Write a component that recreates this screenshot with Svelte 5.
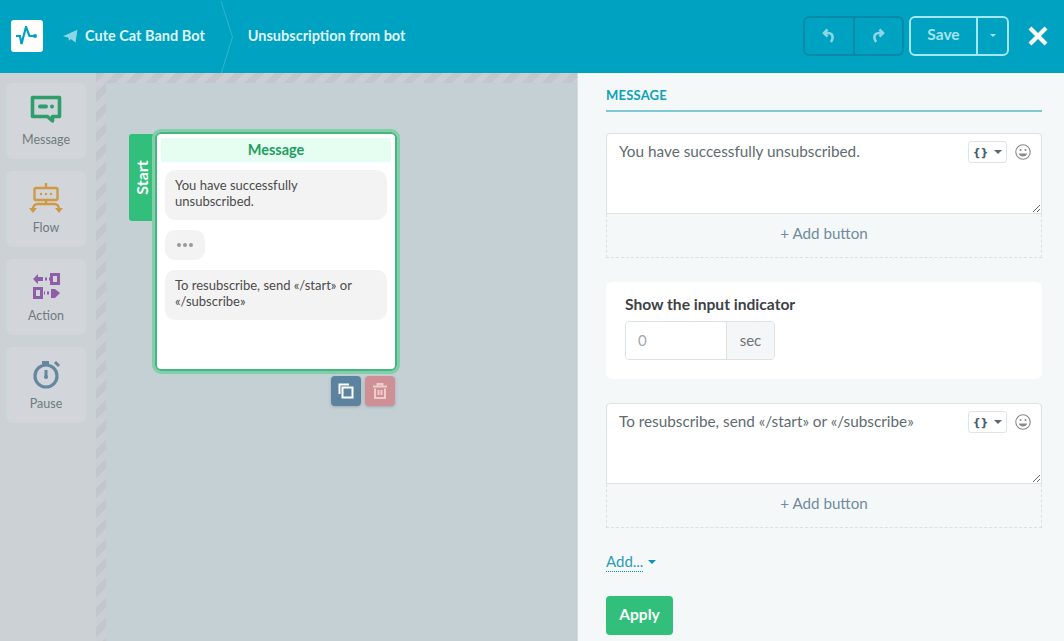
<script>
	const tools = [
		{ id: 'message', label: 'Message' },
		{ id: 'flow', label: 'Flow' },
		{ id: 'action', label: 'Action' },
		{ id: 'pause', label: 'Pause' }
	];

	const messages = [
		'You have successfully unsubscribed.',
		'To resubscribe, send «/start» or «/subscribe»'
	];
</script>

<div class="page">
	<header class="topbar">
		<div class="logo">
			<svg width="22" height="20" viewBox="0 0 22 20" fill="none" stroke="#00a2c1" stroke-width="2.200">
				<path d="M0 10h4l1.500 8L10 1l3.500 9H19" />
				<circle cx="19" cy="10" r="2" fill="#00a2c1" stroke="none" />
			</svg>
		</div>
		<svg class="plane" width="15" height="14" viewBox="0 0 15 14">
			<path d="M0 7.200 14.400.8 12.600 13.400 7.600 10l-1.400 2-1-3.600z" fill="#8ed6e6" />
		</svg>
		<span class="crumb">Cute Cat Band Bot</span>
		<svg class="chevron" width="14" height="73" viewBox="0 0 14 73" fill="none" stroke="#33b4cd">
			<path d="M1 0 12.500 36 1 73" />
		</svg>
		<span class="crumb current">Unsubscription from bot</span>

		<div class="actions">
			<div class="history">
				<button type="button" aria-label="Undo">
					<svg width="16" height="16" viewBox="0 0 16 16" fill="none" stroke="#8ed6e6" stroke-width="2.600">
						<path d="M6.500 1.500 3 5l3.500 3.500" />
						<path d="M3.500 5h3.500c3 0 4.600 2 4.600 4.200 0 1.900-.7 3.300-1.700 4.800" />
					</svg>
				</button>
				<button type="button" aria-label="Redo">
					<svg width="16" height="16" viewBox="0 0 16 16" fill="none" stroke="#8ed6e6" stroke-width="2.600">
						<path d="M9.500 1.500 13 5 9.500 8.500" />
						<path d="M12.500 5H9C6 5 4.400 7 4.400 9.200c0 1.900.7 3.300 1.700 4.800" />
					</svg>
				</button>
			</div>
			<div class="save">
				<button type="button" class="save-main">Save</button>
				<button type="button" class="save-caret" aria-label="More"><i class="caret light"></i></button>
			</div>
			<button type="button" class="close" aria-label="Close">
				<svg width="20" height="20" viewBox="0 0 20 20" stroke="#fff" stroke-width="4.200">
					<path d="M2 2l16 16M18 2 2 18" />
				</svg>
			</button>
		</div>
	</header>

	<main class="body">
		<section class="editor">
			<aside class="tools">
				{#each tools as tool}
					<div class="tool">
						<svg width="32" height="30" viewBox="0 0 32 30" fill="none">
							{#if tool.id === 'message'}
								<path d="M2.500 2.500h27v19h-7v4.500l-5-4.500h-15z" stroke="#2f9e6c" stroke-width="3.600" stroke-linejoin="round" fill="#d0d3d7" />
								<rect x="8" y="9.500" width="10" height="4" rx="2" fill="#2f9e6c" />
								<circle cx="22" cy="11.500" r="2" fill="#2f9e6c" />
							{:else if tool.id === 'flow'}
								<path d="M16 0v4M16 17v4M3 27c0-4 1-6 5-6h16c4 0 5 2 5 6" stroke="#d09a45" stroke-width="2.400" />
								<rect x="4.500" y="5" width="23" height="12" rx="1.500" stroke="#d09a45" stroke-width="2.400" />
								<circle cx="11" cy="11" r="1.200" fill="#d09a45" />
								<circle cx="16" cy="11" r="1.200" fill="#d09a45" />
								<circle cx="21" cy="11" r="1.200" fill="#d09a45" />
								<path d="M-1 25h8l-4 5zM25 25h8l-4 5z" fill="#d09a45" />
							{:else if tool.id === 'action'}
								<path d="M3 8l5-5v10zM8 6h5v4H8z" fill="#8e5fa8" />
								<path d="M15 8h2M19 8h1" stroke="#8e5fa8" stroke-width="3" />
								<rect x="21.500" y="3.500" width="7" height="9" stroke="#8e5fa8" stroke-width="3" />
								<rect x="4.500" y="17.500" width="7" height="9" stroke="#8e5fa8" stroke-width="3" />
								<path d="M14 22h1M17 22h2" stroke="#8e5fa8" stroke-width="3" />
								<path d="M21 18h4l5 4-5 5h-4z" fill="#8e5fa8" />
							{:else}
								<circle cx="16" cy="17" r="11" stroke="#65879f" stroke-width="3.200" />
								<path d="M16 11v7" stroke="#65879f" stroke-width="3" />
								<circle cx="16" cy="18" r="2" fill="#65879f" />
								<path d="M12 3.500h7M25 3l4 4" stroke="#65879f" stroke-width="3" />
							{/if}
						</svg>
						<span>{tool.label}</span>
					</div>
				{/each}
			</aside>

			<div class="canvas">
				<div class="node">
					<div class="start"><span>Start</span></div>
					<div class="node-card">
						<div class="node-title">Message</div>
						<div class="bubble">{messages[0]}</div>
						<div class="bubble typing"><i></i><i></i><i></i></div>
						<div class="bubble">{messages[1]}</div>
					</div>
					<div class="node-actions">
						<button type="button" class="copy" aria-label="Copy">
							<svg width="16" height="16" viewBox="0 0 16 16" fill="none" stroke="#fff" stroke-width="2">
								<path d="M1.500 11V1.500H11" />
								<rect x="4.500" y="4.500" width="10" height="10" />
							</svg>
						</button>
						<button type="button" class="remove" aria-label="Delete">
							<svg width="16" height="16" viewBox="0 0 16 16" fill="none" stroke="#eecccc" stroke-width="2">
								<path d="M1 3.500h14M5.500 3V1h5v2" />
								<path d="M3 5.500v9.500h10V5.500" />
								<path d="M6.500 7v5M9.500 7v5" />
							</svg>
						</button>
					</div>
				</div>
			</div>
		</section>

		<section class="panel">
			<h2>MESSAGE</h2>

			{@render messageBox(messages[0])}

			<div class="indicator">
				<label for="indicator-sec">Show the input indicator</label>
				<div class="input-group">
					<input id="indicator-sec" placeholder="0" />
					<span>sec</span>
				</div>
			</div>

			{@render messageBox(messages[1])}

			<button type="button" class="add-link"><span>Add...</span><i class="caret teal"></i></button>
			<button type="button" class="apply">Apply</button>
		</section>
	</main>
</div>

{#snippet messageBox(text)}
	<div class="message-box">
		<div class="text-wrap">
			<textarea value={text}></textarea>
			<div class="text-tools">
				<button type="button" class="vars" aria-label="Variables"><b>{'{}'}</b><i class="caret dark"></i></button>
				<svg width="16" height="16" viewBox="0 0 16 16" fill="none" stroke="#8a8a8a" stroke-width="1.100">
					<circle cx="8" cy="8" r="7.200" />
					<circle cx="5.500" cy="6" r="1" fill="#8a8a8a" stroke="none" />
					<circle cx="10.500" cy="6" r="1" fill="#8a8a8a" stroke="none" />
					<path d="M3.800 9.500h8.400c-.5 2-2 3-4.200 3s-3.700-1-4.200-3z" fill="#8a8a8a" stroke="none" />
				</svg>
			</div>
		</div>
		<div class="add-button">+ Add button</div>
	</div>
{/snippet}

<style>
	:global(body) {
		margin: 0;
		font-family: 'Lato', 'Noto Sans', sans-serif;
	}

	button {
		font-family: inherit;
		padding: 0;
		border: 0;
		background: none;
	}

	.page {
		width: 1064px;
		height: 641px;
		display: flex;
		flex-direction: column;
		overflow: hidden;
	}

	.topbar {
		height: 73px;
		flex: none;
		box-sizing: border-box;
		display: flex;
		align-items: center;
		padding: 0 16px 2px 11px;
		background: #00a2c1;
		color: #dff4f8;
	}

	.logo {
		width: 32px;
		height: 32px;
		margin-right: 20px;
		display: flex;
		align-items: center;
		justify-content: center;
		border-radius: 3px;
		background: #fff;
	}

	.plane {
		margin-right: 7px;
	}

	.crumb {
		font-size: 14.500px;
		font-weight: 700;
	}

	.chevron {
		margin: 1px 14px 0 15px;
		flex: none;
		align-self: flex-start;
	}

	.actions {
		margin-left: auto;
		display: flex;
		align-items: center;
	}

	.history {
		display: flex;
		height: 40px;
		width: 101px;
		box-sizing: border-box;
		border: 2px solid #0a8aa6;
		border-radius: 6px;
		margin-right: 5px;
	}

	.history button {
		flex: 1;
		display: flex;
		align-items: center;
		justify-content: center;
	}

	.history button + button {
		border-left: 2px solid #0a8aa6;
	}

	.save {
		display: flex;
		width: 100px;
		height: 40px;
		box-sizing: border-box;
		border: 2px solid #a5e6f2;
		border-radius: 6px;
		margin-right: 19px;
	}

	.save-main {
		flex: 1;
		padding-bottom: 3px;
		color: #a5e3ee;
		font-size: 15.500px;
		font-weight: 700;
	}

	.save-caret {
		width: 31px;
		display: flex;
		align-items: center;
		justify-content: center;
		border-left: 2px solid #a5e6f2;
	}

	.close {
		display: flex;
	}

	.caret {
		display: inline-block;
		width: 0;
		height: 0;
		border-left: 4px solid transparent;
		border-right: 4px solid transparent;
		border-top: 4px solid currentColor;
	}

	.caret.light {
		color: #a5e3ee;
		border-left-width: 3.500px;
		border-right-width: 3.500px;
		border-top-width: 3px;
	}

	.caret.teal {
		color: #0b96b3;
		margin-left: 5px;
	}

	.caret.dark {
		color: #5a6870;
		margin-left: 6px;
	}

	.body {
		flex: 1;
		display: flex;
		min-height: 0;
	}

	.editor {
		width: 578px;
		flex: none;
		display: flex;
		border-right: 1px solid #d7dcdd;
		box-sizing: border-box;
		background: #c5d0d5;
	}

	.tools {
		width: 96px;
		flex: none;
		box-sizing: border-box;
		padding: 10px 10px 0 6px;
		display: flex;
		flex-direction: column;
		gap: 12px;
		background: #cbd1d5;
	}

	.tool {
		height: 76px;
		box-sizing: border-box;
		padding-top: 12px;
		display: flex;
		flex-direction: column;
		align-items: center;
		border-radius: 6px;
		background: #d2d5d9;
		color: #717a80;
		font-size: 12.500px;
	}

	.tool svg {
		overflow: visible;
		margin-bottom: 7px;
	}

	.canvas {
		flex: 1;
		position: relative;
		background-color: #c5d0d5;
		border-left: 10px solid transparent;
		border-top: 10px solid transparent;
		background-image: repeating-linear-gradient(135deg, #c3c7cd 0 7px, #cbced3 7px 14px);
		background-origin: border-box;
		background-clip: border-box;
	}

	.canvas::before {
		content: '';
		position: absolute;
		inset: 0;
		background: #c5d0d5;
	}

	.node {
		position: absolute;
		left: 49px;
		top: 49px;
		width: 242px;
		height: 239px;
	}

	.start {
		position: absolute;
		left: -26px;
		top: 2px;
		width: 27px;
		height: 87px;
		box-sizing: border-box;
		padding-right: 2px;
		display: flex;
		align-items: center;
		justify-content: center;
		border-radius: 3px 0 0 3px;
		background: #32bf7c;
		color: #fff;
		font-size: 16px;
		font-weight: 700;
	}

	.start span {
		transform: rotate(-90deg);
	}

	.node-card {
		position: relative;
		height: 100%;
		box-sizing: border-box;
		padding: 4px 4px 0;
		border: 2px solid #47b57f;
		outline: 3px solid #80cfa8;
		border-radius: 6px;
		background: #fff;
	}

	.node-title {
		height: 24px;
		line-height: 24px;
		margin-bottom: 8px;
		text-align: center;
		background: #e6fdf1;
		color: #1e9e63;
		font-size: 14.500px;
		font-weight: 700;
	}

	.bubble {
		margin: 0 4px 10px;
		padding: 7px 20px 11px 10px;
		border-radius: 10px;
		background: #f3f3f3;
		color: #4b4b4b;
		font-size: 13px;
		line-height: 16px;
	}

	.bubble.typing {
		width: 40px;
		height: 30px;
		box-sizing: border-box;
		padding: 0;
		display: flex;
		align-items: center;
		justify-content: center;
		gap: 2px;
	}

	.bubble.typing i {
		width: 4px;
		height: 4px;
		border-radius: 50%;
		background: #9a9a9a;
	}

	.node-actions {
		position: absolute;
		right: 2px;
		top: 244px;
		display: flex;
		gap: 4px;
	}

	.node-actions button {
		width: 30px;
		height: 30px;
		display: flex;
		align-items: center;
		justify-content: center;
		border-radius: 4px;
		box-shadow: 0 1px 3px rgba(60, 80, 90, 0.3);
	}

	.copy {
		background: #5b83a0;
	}

	.remove {
		background: #cf9095;
	}

	.panel {
		flex: 1;
		min-width: 0;
		box-sizing: border-box;
		padding: 0 22px 0 28px;
		background: #f5f8f8;
		display: flex;
		flex-direction: column;
		align-items: flex-start;
	}

	h2 {
		align-self: stretch;
		margin: 0 0 21px;
		height: 39px;
		line-height: 45px;
		box-sizing: border-box;
		border-bottom: 2px solid #7fc9d3;
		color: #0ba3b9;
		font-size: 13px;
		font-weight: 700;
		letter-spacing: 0.2px;
	}

	.message-box {
		align-self: stretch;
	}

	.text-wrap {
		position: relative;
		height: 81px;
	}

	textarea {
		display: block;
		width: 100%;
		height: 100%;
		box-sizing: border-box;
		padding: 8px 12px;
		border: 1px solid #dbe2e2;
		border-radius: 4px 4px 0 0;
		background: #fff;
		color: #5f6b70;
		font-family: inherit;
		font-size: 15.300px;
		line-height: 18px;
		outline: none;
	}

	.text-tools {
		position: absolute;
		top: 8px;
		right: 11px;
		display: flex;
		align-items: center;
		gap: 8px;
	}

	.vars {
		width: 39px;
		height: 22px;
		display: flex;
		align-items: center;
		justify-content: center;
		border: 1px solid #dfe5e5;
		border-radius: 3px;
		background: #fff;
		color: #46606c;
		font-family: 'DejaVu Sans', sans-serif;
		font-size: 11px;
	}

	.add-button {
		height: 44px;
		line-height: 39px;
		box-sizing: border-box;
		border: 1px dashed #dbe0e0;
		border-top: 0;
		text-align: center;
		color: #6f8b9c;
		font-size: 15.200px;
	}

	.indicator {
		align-self: stretch;
		height: 97px;
		box-sizing: border-box;
		margin: 24px 0 24px;
		padding: 13px 19px;
		border-radius: 6px;
		background: #fff;
	}

	.indicator label {
		display: block;
		margin-bottom: 8px;
		color: #3e4247;
		font-size: 15.600px;
		font-weight: 700;
		line-height: 18px;
	}

	.input-group {
		display: flex;
		width: 150px;
		height: 39px;
		box-sizing: border-box;
		border: 1px solid #dbe2e2;
		border-radius: 4px;
		overflow: hidden;
	}

	.input-group input {
		width: 100px;
		box-sizing: border-box;
		padding: 0 12px 2px;
		border: 0;
		outline: none;
		background: #fff;
		font-family: inherit;
		font-size: 15px;
	}

	.input-group input::placeholder {
		color: #a3a8ab;
	}

	.input-group span {
		flex: 1;
		display: flex;
		align-items: center;
		justify-content: center;
		padding-bottom: 2px;
		border-left: 1px solid #dbe2e2;
		background: #f4f6f7;
		color: #6d7478;
		font-size: 15px;
	}

	.add-link {
		margin-top: 24px;
		display: flex;
		align-items: center;
		color: #2b9cb8;
		font-size: 15px;
	}

	.add-link span {
		border-bottom: 1px dotted #0b96b3;
		line-height: 19px;
	}

	.apply {
		margin-top: 24px;
		width: 67px;
		height: 39px;
		padding-bottom: 3px;
		border-radius: 4px;
		background: #32bf7c;
		color: #fff;
		font-size: 15.500px;
		font-weight: 700;
	}
</style>
